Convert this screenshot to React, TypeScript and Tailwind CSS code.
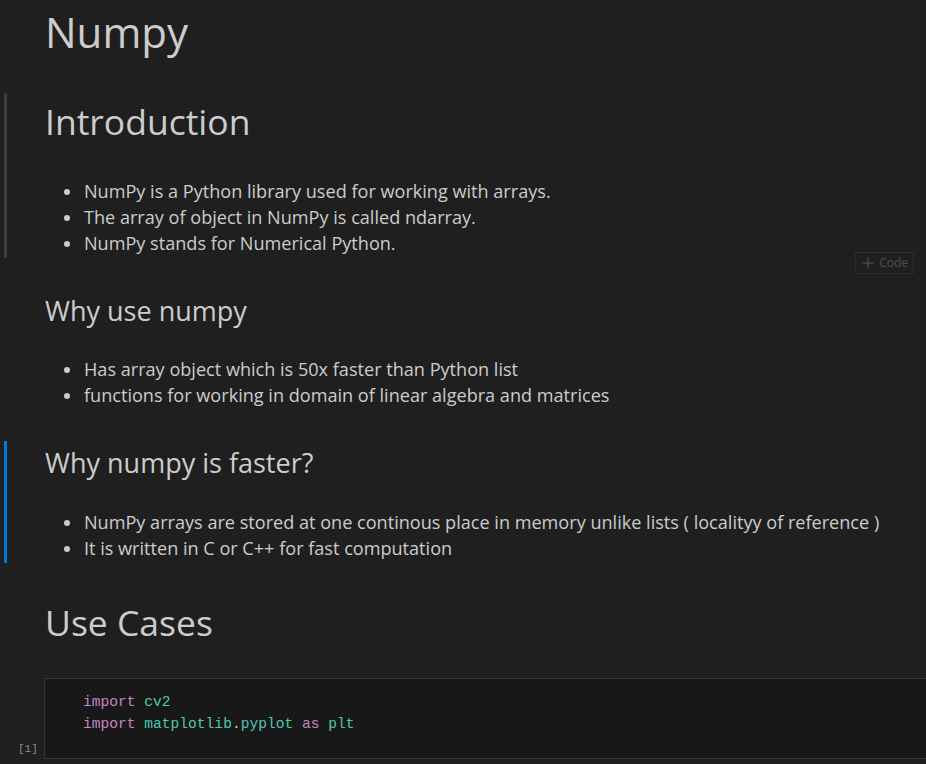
import React from "react";

const bullet = (text: string, i: number) => (
  <li key={i} className="flex items-center h-[26px]">
    <span className="ml-[19px] w-[6px] h-[6px] rounded-full bg-[#cccccc] shrink-0" />
    <span className="ml-[14px] whitespace-nowrap">{text}</span>
  </li>
);

export default function App() {
  return (
    <div className="w-[926px] h-[764px] overflow-hidden bg-[#1f1f1f] text-[#cccccc] font-['Open_Sans',sans-serif] pl-[4px]">
      {/* Title cell */}
      <div className="border-l-[3px] border-transparent pl-[38px] pt-[6px]">
        <h1 className="text-[42px] leading-[52px] font-normal">Numpy</h1>
      </div>

      {/* Introduction cell (hovered) */}
      <div className="relative mt-[35px] border-l-[3px] border-[#3b3b42] pl-[38px] pt-[6px] pb-[1px]">
        <h2 className="text-[35.5px] leading-[44px] font-normal">Introduction</h2>
        <ul className="mt-[36px] text-[18.1px]">
          {[
            "NumPy is a Python library used for working with arrays.",
            "The array of object in NumPy is called ndarray.",
            "NumPy stands for Numerical Python.",
          ].map(bullet)}
        </ul>
        <div className="absolute right-[12px] -bottom-[16px] flex items-center gap-[5px] h-[22px] pl-[6px] pr-[5px] border border-[#2c2c2c] text-[#505050] text-[12px]">
          <svg width="12" height="12" viewBox="0 0 12 12" fill="none" stroke="#555555" strokeWidth="1">
            <path d="M6 0.5v11M0.5 6h11" />
          </svg>
          <span>Code</span>
        </div>
      </div>

      {/* Why use numpy */}
      <div className="border-l-[3px] border-transparent pl-[38px] pt-[36px]">
        <h3 className="text-[27px] leading-[34px] font-normal">Why use numpy</h3>
        <ul className="mt-[29px] text-[18.1px]">
          {[
            "Has array object which is 50x faster than Python list",
            "functions for working in domain of linear algebra and matrices",
          ].map(bullet)}
        </ul>
      </div>

      {/* Why numpy is faster (selected) */}
      <div className="mt-[32px] border-l-[3px] border-[#0078d4] pl-[38px] pt-[5px] pb-[1px]">
        <h3 className="text-[27px] leading-[34px] font-normal">Why numpy is faster?</h3>
        <ul className="mt-[30px] text-[18.1px]">
          {[
            "NumPy arrays are stored at one continous place in memory unlike lists ( localityy of reference )",
            "It is written in C or C++ for fast computation",
          ].map(bullet)}
        </ul>
      </div>

      {/* Use Cases */}
      <div className="border-l-[3px] border-transparent pl-[38px] pt-[37px]">
        <h2 className="text-[35.5px] leading-[44px] font-normal">Use Cases</h2>
      </div>

      {/* Code cell */}
      <div className="flex items-end mt-[34px] -ml-[4px]">
        <div className="w-[44px] shrink-0 pl-[18px] pb-[3px] font-['Liberation_Mono',monospace] text-[11px] leading-[14px] text-[#8c8c8c]">
          [1]
        </div>
        <div className="w-[900px] shrink-0 h-[81px] bg-[#181818] border border-[#363636] pl-[38px] pt-[12px] font-['Liberation_Mono',monospace] text-[14.6px] leading-[22px] whitespace-pre">
          <div>
            <span className="text-[#c586c0]">import</span> <span className="text-[#4ec9b0]">cv2</span>
          </div>
          <div>
            <span className="text-[#c586c0]">import</span> <span className="text-[#4ec9b0]">matplotlib</span>
            <span className="text-[#cccccc]">.</span>
            <span className="text-[#4ec9b0]">pyplot</span> <span className="text-[#c586c0]">as</span>{" "}
            <span className="text-[#4ec9b0]">plt</span>
          </div>
        </div>
      </div>
    </div>
  );
}
